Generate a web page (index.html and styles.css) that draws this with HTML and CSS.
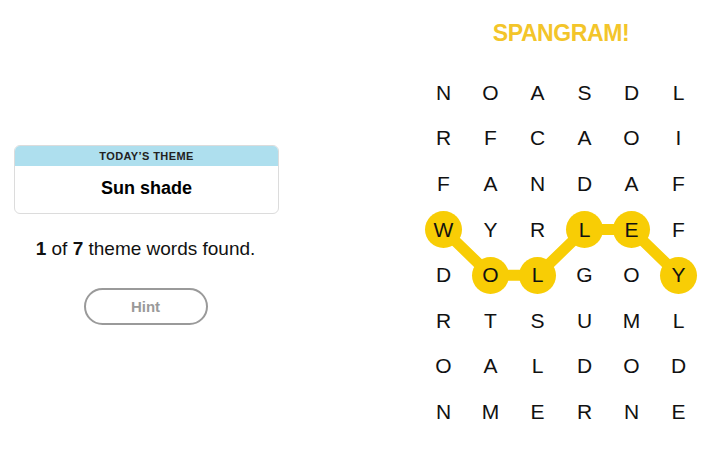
FILE: index.html
```html
<!DOCTYPE html>
<html lang="en">

<head>
  <meta charset="UTF-8">
  <meta name="viewport" content="width=device-width, initial-scale=1.0">
  <title>Strands</title>
  <link rel="stylesheet" href="styles.css">
</head>

<body>
  <div class="page">
    <div class="side">
      <div class="theme">
        <div class="theme-label">TODAY’S THEME</div>
        <div class="theme-name">Sun shade</div>
      </div>
      <p class="progress"><b>1</b> of <b>7</b> theme words found.</p>
      <button class="hint">Hint</button>
    </div>

    <div class="board">
      <h2 class="status">SPANGRAM!</h2>
      <div class="grid">
        <svg class="path" viewBox="0 0 282 365" width="282" height="365">
          <polyline points="23.5,159.6 70.5,205.2 117.5,205.2 164.5,159.6 211.5,159.6 258.5,205.2"
            fill="none" stroke="#f8cd05" stroke-width="11" stroke-linejoin="round" stroke-linecap="round" />
        </svg>
        <div class="cell"><span>N</span></div>
        <div class="cell"><span>O</span></div>
        <div class="cell"><span>A</span></div>
        <div class="cell"><span>S</span></div>
        <div class="cell"><span>D</span></div>
        <div class="cell"><span>L</span></div>

        <div class="cell"><span>R</span></div>
        <div class="cell"><span>F</span></div>
        <div class="cell"><span>C</span></div>
        <div class="cell"><span>A</span></div>
        <div class="cell"><span>O</span></div>
        <div class="cell"><span>I</span></div>

        <div class="cell"><span>F</span></div>
        <div class="cell"><span>A</span></div>
        <div class="cell"><span>N</span></div>
        <div class="cell"><span>D</span></div>
        <div class="cell"><span>A</span></div>
        <div class="cell"><span>F</span></div>

        <div class="cell found"><span>W</span></div>
        <div class="cell"><span>Y</span></div>
        <div class="cell"><span>R</span></div>
        <div class="cell found"><span>L</span></div>
        <div class="cell found"><span>E</span></div>
        <div class="cell"><span>F</span></div>

        <div class="cell"><span>D</span></div>
        <div class="cell found"><span>O</span></div>
        <div class="cell found"><span>L</span></div>
        <div class="cell"><span>G</span></div>
        <div class="cell"><span>O</span></div>
        <div class="cell found"><span>Y</span></div>

        <div class="cell"><span>R</span></div>
        <div class="cell"><span>T</span></div>
        <div class="cell"><span>S</span></div>
        <div class="cell"><span>U</span></div>
        <div class="cell"><span>M</span></div>
        <div class="cell"><span>L</span></div>

        <div class="cell"><span>O</span></div>
        <div class="cell"><span>A</span></div>
        <div class="cell"><span>L</span></div>
        <div class="cell"><span>D</span></div>
        <div class="cell"><span>O</span></div>
        <div class="cell"><span>D</span></div>

        <div class="cell"><span>N</span></div>
        <div class="cell"><span>M</span></div>
        <div class="cell"><span>E</span></div>
        <div class="cell"><span>R</span></div>
        <div class="cell"><span>N</span></div>
        <div class="cell"><span>E</span></div>
      </div>
    </div>
  </div>
</body>

</html>
```

FILE: styles.css
```css
body {
  margin: 0;
  font-family: 'Liberation Sans', Arial, sans-serif;
  color: #000;
  background: #fff;
}

.page {
  display: flex;
  width: 710px;
  height: 465px;
}

.side {
  width: 291px;
  padding-top: 145px;
  display: flex;
  flex-direction: column;
  align-items: center;
}

.theme {
  width: 263px;
  border: 1px solid #dcdcdc;
  border-radius: 6px;
  overflow: hidden;
  margin-left: 2px;
}

.theme-label {
  height: 20px;
  line-height: 21px;
  background: #aedfee;
  text-align: center;
  font-size: 11px;
  font-weight: bold;
  letter-spacing: 0.4px;
  color: #222;
}

.theme-name {
  height: 47px;
  line-height: 44px;
  text-align: center;
  font-size: 18px;
  font-weight: bold;
}

.progress {
  margin: 23px 0 0;
  font-size: 19px;
  line-height: 24px;
  color: #111;
}

.hint {
  margin-top: 27px;
  width: 124px;
  height: 37px;
  border: 2px solid #9a9a9a;
  border-radius: 19px;
  background: #fff;
  color: #9a9a9a;
  font-family: inherit;
  font-size: 15px;
  font-weight: bold;
}

.board {
  margin-left: 129px;
  width: 282px;
}

.status {
  margin: 0;
  padding-top: 20px;
  height: 50px;
  box-sizing: border-box;
  text-align: center;
  font-size: 23px;
  line-height: 26px;
  font-weight: bold;
  color: #f3c52a;
  letter-spacing: -0.4px;
}

.grid {
  position: relative;
  margin-top: 20px;
  display: grid;
  grid-template-columns: repeat(6, 47px);
  grid-auto-rows: 45.6px;
}

.path {
  position: absolute;
  left: 0;
  top: 0;
}

.cell {
  position: relative;
  display: flex;
  align-items: center;
  justify-content: center;
}

.cell span {
  width: 37px;
  height: 37px;
  border-radius: 50%;
  display: flex;
  align-items: center;
  justify-content: center;
  font-size: 21px;
  color: #111;
}

.cell.found span {
  background: #f8cd05;
}
```
